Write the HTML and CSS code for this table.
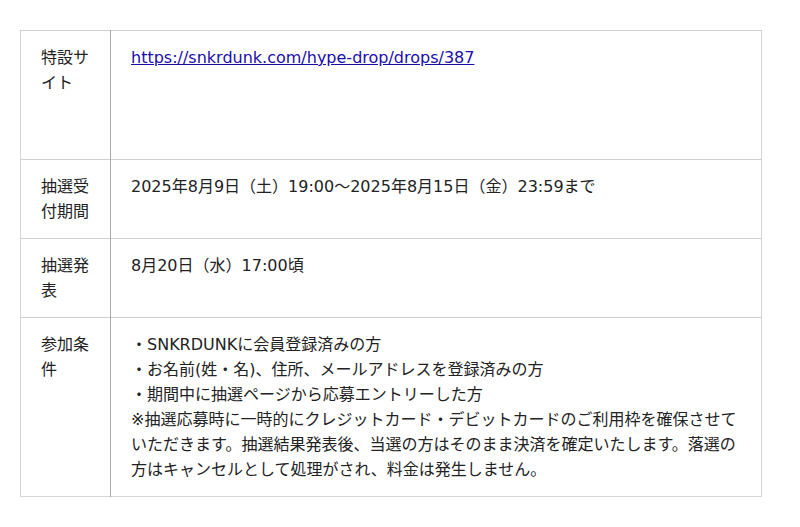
FILE: index.html
```html
<!DOCTYPE html>
<html lang="ja">
<head>
  <meta charset="UTF-8" />
  <title>抽選概要</title>
  <link rel="stylesheet" href="styles.css">
</head>
<body>
  <table class="info-table">
    <tr>
      <th>特設サイト</th>
      <td class="tall"><a href="https://snkrdunk.com/hype-drop/drops/387">https://snkrdunk.com/hype-drop/drops/387</a></td>
    </tr>
    <tr>
      <th>抽選受付期間</th>
      <td>2025年8月9日（土）19:00～2025年8月15日（金）23:59まで</td>
    </tr>
    <tr>
      <th>抽選発表</th>
      <td>8月20日（水）17:00頃</td>
    </tr>
    <tr>
      <th>参加条件</th>
      <td>・SNKRDUNKに会員登録済みの方<br>・お名前(姓・名)、住所、メールアドレスを登録済みの方<br>・期間中に抽選ページから応募エントリーした方<br>※抽選応募時に一時的にクレジットカード・デビットカードのご利用枠を確保させていただきます。抽選結果発表後、当選の方はそのまま決済を確定いたします。落選の方はキャンセルとして処理がされ、料金は発生しません。</td>
    </tr>
  </table>
</body>
</html>
```

FILE: styles.css
```css
body {
  margin: 0;
  padding: 30px 20px;
  background: #fff;
  color: #222;
  font-family: "DejaVu Sans", "Noto Sans CJK JP", sans-serif;
  font-size: 16px;
  line-height: 25px;
}
.info-table {
  width: 742px;
  border-collapse: collapse;
  border: 1px solid #d6d6d6;
}
.info-table th,
.info-table td {
  padding: 14px 20px 14px;
  text-align: left;
  vertical-align: top;
  font-weight: normal;
  border-top: 1px solid #cfcfcf;
}
.info-table th {
  width: 49px;
  border-right: 1px solid #a8a8a8;
}
.info-table td.tall {
  height: 100px;
}
.info-table a {
  color: #1a0dab;
}
```
